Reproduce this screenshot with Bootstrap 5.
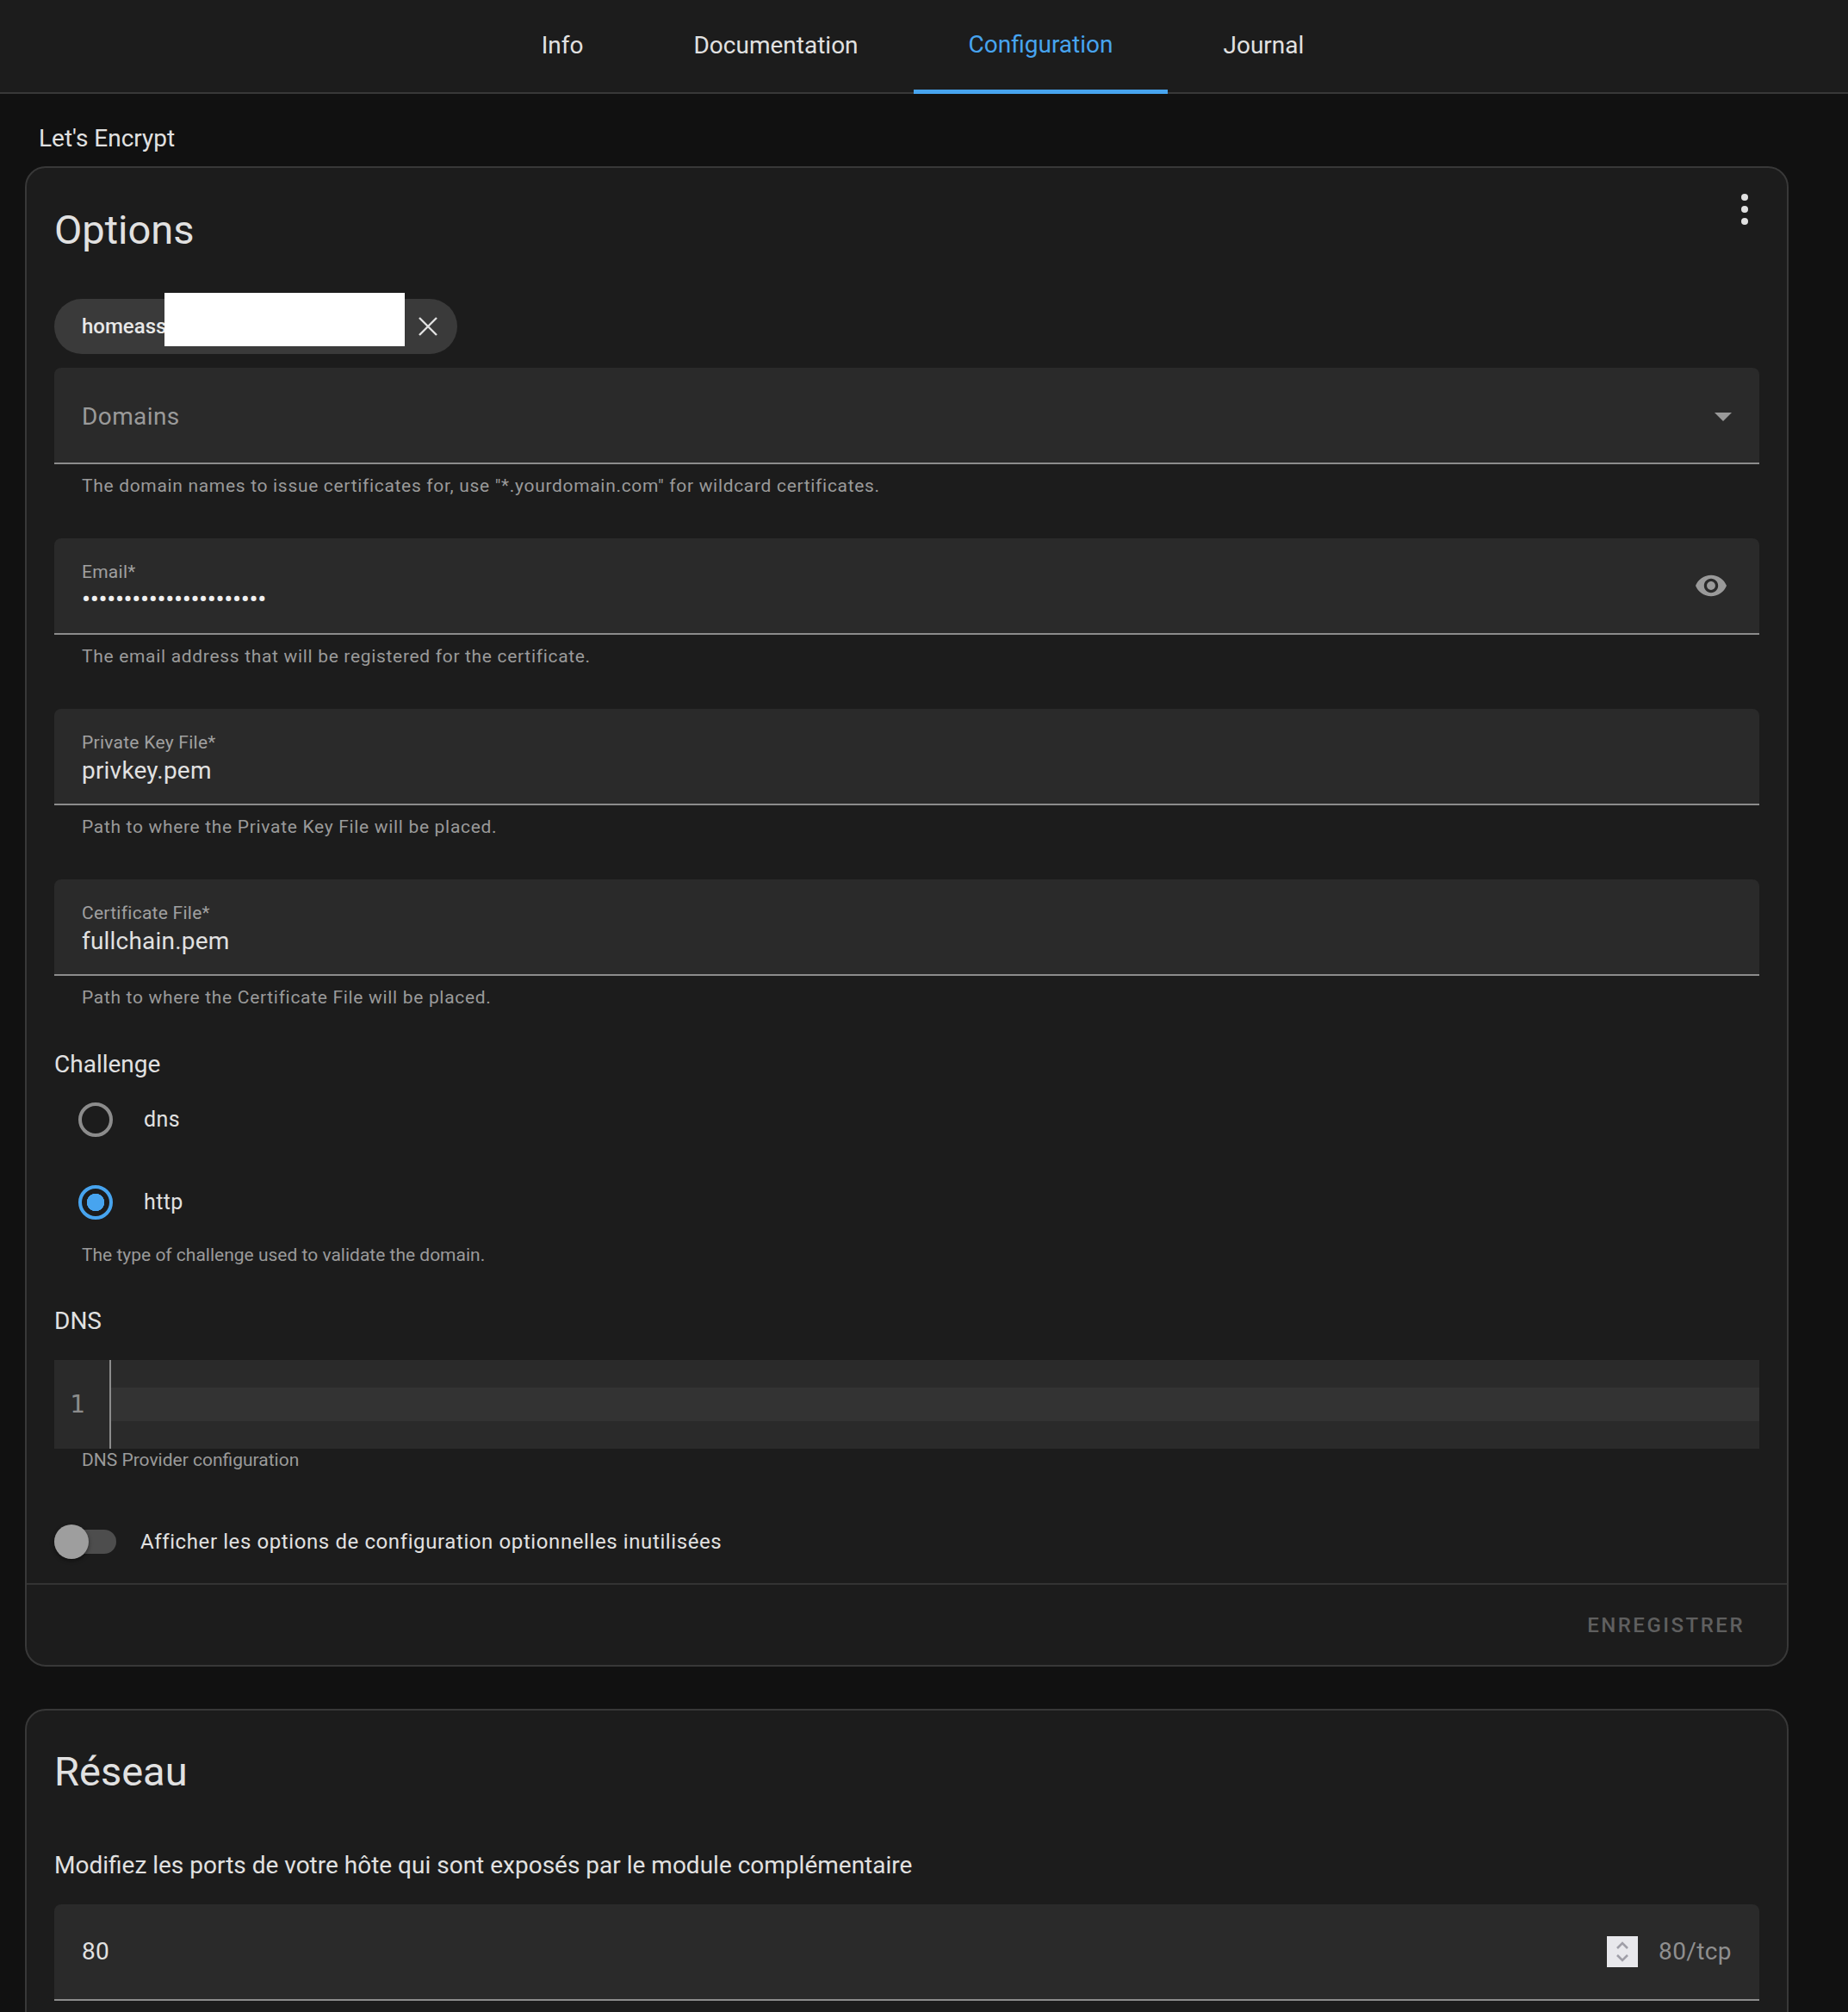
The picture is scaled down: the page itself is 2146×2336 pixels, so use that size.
<!DOCTYPE html>
<html lang="fr">
<head>
  <meta charset="UTF-8">
  <meta name="viewport" content="width=device-width, initial-scale=1.0">
  <title>Let's Encrypt</title>
  <link href="https://cdn.jsdelivr.net/npm/bootstrap@5.3.0/dist/css/bootstrap.min.css" rel="stylesheet">
  <style>
    html, body { height: 2336px; overflow: hidden; }
    body { background: #111; color: #e1e1e1; font-family: Roboto, "Liberation Sans", sans-serif; font-size: 28px; }

    /* tabs */
    .top-tabs { height: 109px; padding-right: 3px; background: #1c1c1c; border-bottom: 2px solid #383838; }
    .top-tabs .nav-link { height: 109px; padding: 0 64px 3px; display: flex; align-items: center; color: #e1e1e1; font-size: 28px; border-radius: 0; }
    .top-tabs .nav-link.active { color: #47a4ef; border-bottom: 5px solid #47a4ef; padding-bottom: 1px; }

    .addon-name { padding: 35px 0 15px 16px; line-height: 34px; font-size: 28px; }
    .page-main { padding-left: 29px; width: 2077px; }

    .ha-card { background: #1c1c1c; border: 2px solid #383838; border-radius: 24px; color: #e1e1e1; }
    .ha-card .card-body { padding: 40px 32px 28px; }
    .ha-card .card-footer { height: 95px; background: none; border-top: 2px solid #333; padding: 0 49px 0 0; border-radius: 0; }
    .card-gap { margin-bottom: 49px; }
    .network-card .card-body { padding-top: 39px; }
    .card-title-big { font-size: 47px; line-height: 64px; font-weight: 400; margin: 0; }
    .kebab { position: absolute; top: 30px; right: 44px; }

    .chip-wrap { position: relative; width: 468px; height: 64px; margin: 48px 0 16px; padding: 0 32px; background: #3a3a3a; border-radius: 32px; font-size: 24px; font-weight: 500; color: #e8e8e8; }
    .chip-mask { position: absolute; left: 128px; top: -7px; width: 279px; height: 62px; background: #fff; }
    .chip-x { position: absolute; right: 23px; top: 21px; }

    .ha-field { height: 112px; background: #2a2a2a; border-bottom: 2px solid #8c8c8c; border-radius: 8px 8px 0 0; padding: 0 32px; }
    .ha-field-label { font-size: 21px; line-height: 29px; letter-spacing: .26px; color: #a0a0a0; }
    .ha-field-value { font-size: 28px; line-height: 36px; letter-spacing: .2px; color: #e1e1e1; }
    .ha-field-stack { padding-top: 25px; }
    .field-select { padding-top: 3px; }
    .field-placeholder { font-size: 28px; letter-spacing: .4px; color: #9a9a9a; }
    .pw-dots { font-size: 30px; line-height: 34px; letter-spacing: -.4px; color: #f0f0f0; }
    .eye-icon { margin: -25px 6px 0 0; }
    .ha-helper { padding: 11px 32px 0; line-height: 28px; font-size: 21px; letter-spacing: .68px; color: #9a9a9a; margin-bottom: 47px; }
    .ha-helper-last { margin-bottom: 44px; }

    .section-label { font-size: 28px; line-height: 40px; color: #e1e1e1; }
    .radio-row { height: 96px; padding-left: 28px; gap: 36px; }
    .radio-first { margin-top: -4px; }
    .radio-row .form-check-input { width: 40px; height: 40px; margin: 0; flex: none; background: transparent; background-image: none; border: 4px solid #8c8c8c; }
    .radio-row .form-check-input:checked { border-color: #47a4ef; background-color: transparent; background-image: radial-gradient(circle, #47a4ef 0 10px, transparent 10.5px); }
    .radio-row label { font-size: 25px; letter-spacing: .4px; color: #e1e1e1; }
    .radio-helper { margin: -1px 0 43px; padding: 0 32px; line-height: 28px; font-size: 21px; color: #9a9a9a; }

    .code-box { height: 103px; margin-top: 25px; background: #2a2a2a; }
    .code-gutter { width: 66px; border-right: 2px solid #8c8c8c; padding-left: 18px; font-family: "DejaVu Sans Mono", "Liberation Mono", monospace; font-size: 29px; color: #8c8c8c; flex: none; }
    .code-line { height: 39px; background: #333; margin-top: 32px; }
    .code-helper { padding: 0 32px; line-height: 26px; font-size: 21px; color: #9a9a9a; }

    .toggle-row { height: 40px; margin-top: 62px; gap: 28px; }
    .toggle-track { position: relative; width: 72px; height: 28px; background: #4d4d4d; border-radius: 14px; flex: none; }
    .toggle-thumb { position: absolute; left: 0; top: -6px; width: 40px; height: 40px; border-radius: 50%; background: #9e9e9e; box-shadow: 0 2px 5px rgba(0,0,0,.45); }
    .toggle-text { font-size: 24px; letter-spacing: .6px; color: #e1e1e1; }

    .save-btn { padding: 0; border: 0; background: none; font-size: 24px; font-weight: 500; letter-spacing: 2.5px; color: #5f5f5f; }
    .ports-intro { margin: 57px 0 25px; line-height: 40px; font-size: 28px; }
    .spin-box { width: 36px; height: 36px; background: #e8e8ec; margin-right: 24px; }
    .port-suffix { font-size: 28px; letter-spacing: .4px; color: #8f8f8f; }
  </style>
</head>
<body>
  <ul class="nav top-tabs justify-content-center">
    <li class="nav-item"><a class="nav-link" href="#">Info</a></li>
    <li class="nav-item"><a class="nav-link" href="#">Documentation</a></li>
    <li class="nav-item"><a class="nav-link active" href="#">Configuration</a></li>
    <li class="nav-item"><a class="nav-link" href="#">Journal</a></li>
  </ul>

  <div class="page-main">
    <div class="addon-name">Let's Encrypt</div>

    <!-- Options -->
    <div class="card ha-card card-gap">
      <svg class="kebab" width="10" height="36" viewBox="0 0 10 36"><circle cx="5" cy="4" r="4" fill="#e1e1e1"/><circle cx="5" cy="18" r="4" fill="#e1e1e1"/><circle cx="5" cy="32" r="4" fill="#e1e1e1"/></svg>
      <div class="card-body">
        <h2 class="card-title-big">Options</h2>

        <div class="chip-wrap d-flex align-items-center">
          <span>homeassistant</span>
          <span class="chip-mask"></span>
          <svg class="chip-x" width="22" height="22" viewBox="0 0 22 22"><path d="M1 1 21 21M21 1 1 21" stroke="#e1e1e1" stroke-width="2.4" fill="none"/></svg>
        </div>

        <div class="ha-field field-select d-flex align-items-center justify-content-between">
          <span class="field-placeholder">Domains</span>
          <svg width="20" height="10" viewBox="0 0 20 10"><path d="M0 0H20L10 10Z" fill="#9a9a9a"/></svg>
        </div>
        <div class="ha-helper">The domain names to issue certificates for, use "*.yourdomain.com" for wildcard certificates.</div>

        <div class="ha-field ha-field-stack d-flex justify-content-between">
          <div>
            <div class="ha-field-label">Email*</div>
            <div class="pw-dots">••••••••••••••••••••••</div>
          </div>
          <svg class="eye-icon align-self-center" width="36" height="26" viewBox="1 4.5 22 15"><path fill="#9a9a9a" d="M12 4.5C7 4.5 2.73 7.61 1 12c1.73 4.39 6 7.5 11 7.5s9.27-3.11 11-7.5c-1.73-4.39-6-7.5-11-7.5zM12 17c-2.76 0-5-2.24-5-5s2.24-5 5-5 5 2.24 5 5-2.24 5-5 5zm0-8c-1.66 0-3 1.34-3 3s1.34 3 3 3 3-1.34 3-3-1.34-3-3-3z"/></svg>
        </div>
        <div class="ha-helper">The email address that will be registered for the certificate.</div>

        <div class="ha-field ha-field-stack">
          <div class="ha-field-label">Private Key File*</div>
          <div class="ha-field-value">privkey.pem</div>
        </div>
        <div class="ha-helper">Path to where the Private Key File will be placed.</div>

        <div class="ha-field ha-field-stack">
          <div class="ha-field-label">Certificate File*</div>
          <div class="ha-field-value">fullchain.pem</div>
        </div>
        <div class="ha-helper ha-helper-last">Path to where the Certificate File will be placed.</div>

        <div class="section-label">Challenge</div>
        <div class="radio-row radio-first d-flex align-items-center">
          <input class="form-check-input" type="radio" name="challenge" id="ch-dns">
          <label for="ch-dns">dns</label>
        </div>
        <div class="radio-row d-flex align-items-center">
          <input class="form-check-input" type="radio" name="challenge" id="ch-http" checked>
          <label for="ch-http">http</label>
        </div>
        <div class="radio-helper">The type of challenge used to validate the domain.</div>

        <div class="section-label">DNS</div>
        <div class="code-box d-flex">
          <div class="code-gutter d-flex align-items-center">1</div>
          <div class="flex-grow-1"><div class="code-line"></div></div>
        </div>
        <div class="code-helper">DNS Provider configuration</div>

        <div class="toggle-row d-flex align-items-center">
          <div class="toggle-track"><div class="toggle-thumb"></div></div>
          <span class="toggle-text">Afficher les options de configuration optionnelles inutilisées</span>
        </div>
      </div>
      <div class="card-footer d-flex align-items-center justify-content-end">
        <button type="button" class="save-btn">ENREGISTRER</button>
      </div>
    </div>

    <!-- Réseau -->
    <div class="card ha-card network-card">
      <div class="card-body">
        <h2 class="card-title-big">Réseau</h2>
        <div class="ports-intro">Modifiez les ports de votre hôte qui sont exposés par le module complémentaire</div>
        <div class="ha-field d-flex align-items-center">
          <span class="ha-field-value flex-grow-1">80</span>
          <span class="spin-box d-flex align-items-center justify-content-center">
            <svg width="16" height="26" viewBox="0 0 16 26"><path d="M2 9 8 3l6 6M2 17l6 6 6-6" fill="none" stroke="#a09fa8" stroke-width="2.6"/></svg>
          </span>
          <span class="port-suffix">80/tcp</span>
        </div>
        <div class="ha-helper">&nbsp;</div>
      </div>
    </div>
  </div>

  <script src="https://cdn.jsdelivr.net/npm/bootstrap@5.3.0/dist/js/bootstrap.bundle.min.js"></script>
</body>
</html>
